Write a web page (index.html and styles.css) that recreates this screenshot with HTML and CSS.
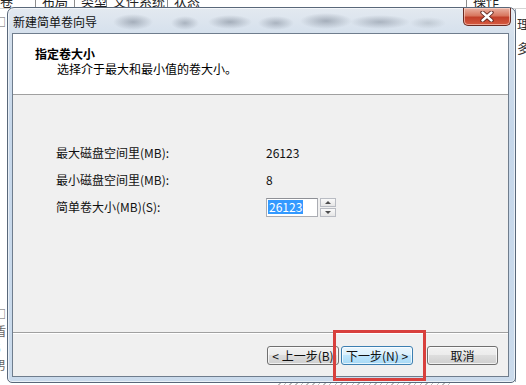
FILE: index.html
```html
<!DOCTYPE html>
<html lang="zh-CN">
<head>
  <meta charset="UTF-8">
  <meta name="viewport" content="width=device-width, initial-scale=1.0">
  <title>新建简单卷向导</title>
  <link rel="stylesheet" href="styles.css">
</head>
<body>
  <div class="app">
    <div class="app-head">
      <div class="col col-vol">卷</div>
      <div class="col col-layout">布局</div>
      <div class="col col-type">类型</div>
      <div class="col col-fs">文件系统</div>
      <div class="col col-state">状态</div>
      <div class="col-fill"></div>
      <div class="col col-ops">操作</div>
    </div>
    <div class="app-main">
      <div class="side-left">
        <div class="side-row row-a"><span>□</span></div>
        <div class="side-gap"></div>
        <div class="side-row"><span>□</span></div>
        <div class="side-row"><span>盾</span></div>
        <div class="side-row"><span>5</span></div>
        <div class="side-row"><span>男</span></div>
      </div>
      <div class="app-fill"></div>
      <div class="side-right">
        <div class="side-item">理</div>
        <div class="side-item">多</div>
      </div>
    </div>
    <div class="app-bottom"><div class="hatch"></div></div>
  </div>

  <div class="window">
    <div class="titlebar">
      <span class="title">新建简单卷向导</span>
      <a class="btn-close" href="#">
        <svg width="14" height="11" viewBox="0 0 14 11">
          <path d="M2.5 1.5 L11.5 9.5 M11.5 1.5 L2.5 9.5" stroke="#5a1f18" stroke-width="4.2" stroke-linecap="round"/>
          <path d="M2.5 1.5 L11.5 9.5 M11.5 1.5 L2.5 9.5" stroke="#fff" stroke-width="2.4" stroke-linecap="round"/>
        </svg>
      </a>
    </div>
    <div class="client">
      <div class="wiz-head">
        <div class="wiz-title">指定卷大小</div>
        <div class="wiz-sub">选择介于最大和最小值的卷大小。</div>
      </div>
      <div class="wiz-body">
        <div class="field">
          <div class="label">最大磁盘空间里(MB):</div>
          <div class="value">26123</div>
        </div>
        <div class="field">
          <div class="label">最小磁盘空间里(MB):</div>
          <div class="value">8</div>
        </div>
        <div class="field">
          <div class="label">简单卷大小(MB)(S):</div>
          <div class="value">
            <div class="spin">
              <div class="spin-input"><span class="sel">26123</span></div>
              <div class="spin-btns">
                <div class="spin-btn"><i class="tri-up"></i></div>
                <div class="spin-btn"><i class="tri-down"></i></div>
              </div>
            </div>
          </div>
        </div>
      </div>
      <div class="wiz-foot">
        <a class="btn" href="#">&lt; 上一步(B)</a>
        <a class="btn btn-hot" href="#">下一步(N) &gt;</a>
        <a class="btn btn-cancel" href="#">取消</a>
      </div>
    </div>
  </div>

  <div class="mark"></div>
</body>
</html>
```

FILE: styles.css
```css
html,body{
  margin: 0;
  padding: 0;
}
body{
  width: 526px;
  height: 385px;
  overflow: hidden;
  position: relative;
  background: #fff;
  font-family: "Noto Sans CJK SC", "Noto Sans", sans-serif;
  font-size: 12px;
  color: #000;
}
a{
  text-decoration: none;
  color: #000;
}

/* background app, mostly hidden behind the wizard */
.app{
  display: flex;
  flex-direction: column;
  height: 385px;
}
.app-head{
  display: flex;
  height: 8px;
  overflow: hidden;
  align-items: flex-end;
  border-bottom: 1px solid #d5d5d5;
  color: #222;
}
.col{
  height: 8px;
  line-height: 2px;
  font-size: 13px;
  padding-left: 6px;
  border-right: 1px solid #8d8d8d;
  box-sizing: border-box;
  white-space: nowrap;
}
.col-vol{ width: 36px; padding-left: 0; }
.col-layout{ width: 39px; }
.col-type{ width: 32px; }
.col-fs{ width: 61px; }
.col-state{ width: 40px; border-right: 0; }
.col-fill{ flex: 1; }
.col-ops{ width: 60px; border-right: 0; border-left: 1px solid #8d8d8d; }
.app-main{
  flex: 1;
  display: flex;
}
.side-left{
  width: 7px;
  display: flex;
  flex-direction: column;
  overflow: hidden;
  color: #666;
}
.side-row{
  display: flex;
  justify-content: flex-end;
  height: 17px;
  line-height: 17px;
  font-size: 12px;
}
.side-row span{
  flex: none;
  width: 13px;
}
.row-a{
  margin-top: 4px;
}
.side-gap{
  height: 275px;
}
.app-fill{
  flex: 1;
}
.side-right{
  width: 10px;
  padding-top: 5px;
  border-left: 1px solid #9aa6b4;
  overflow: hidden;
  color: #333;
}
.side-item{
  height: 24px;
  line-height: 20px;
  font-size: 13px;
  padding-left: 1px;
}
.app-bottom{
  height: 3px;
}
.hatch{
  margin-left: 275px;
  width: 175px;
  height: 3px;
  background: repeating-linear-gradient(135deg, #bdbdbd 0 1px, #fff 1px 4px);
}

/* wizard window */
.window{
  position: absolute;
  left: 7px;
  top: 7px;
  width: 509px;
  height: 376px;
  box-sizing: border-box;
  border: 1px solid #59687a;
  border-radius: 7px 7px 5px 5px;
  padding: 0 6px 5px 4px;
  display: flex;
  flex-direction: column;
  background: linear-gradient(#e3e9f0, #d3dfec 30px, #c6d7ea 120px, #cbdbec);
  box-shadow: inset 0 0 0 1px rgba(255,255,255,.6);
}
.titlebar{
  display: flex;
  justify-content: space-between;
  height: 25px;
  margin: 0 -6px 0 -4px;
  padding-left: 5px;
  background:
    radial-gradient(ellipse 20px 8px at 125px 14px, rgba(110,120,135,.5), transparent),
    radial-gradient(ellipse 14px 7px at 177px 15px, rgba(110,120,135,.45), transparent),
    radial-gradient(ellipse 22px 7px at 222px 14px, rgba(110,120,135,.5), transparent),
    radial-gradient(ellipse 18px 7px at 268px 15px, rgba(110,120,135,.45), transparent),
    radial-gradient(ellipse 26px 8px at 318px 13px, rgba(110,120,135,.5), transparent),
    radial-gradient(ellipse 30px 7px at 372px 14px, rgba(110,120,135,.45), transparent),
    radial-gradient(ellipse 18px 6px at 420px 15px, rgba(140,150,160,.35), transparent);
}
.title{
  padding-top: 6px;
  line-height: 16px;
  font-size: 12px;
  color: #111;
}
.btn-close{
  width: 48px;
  height: 18px;
  margin-right: 4px;
  box-sizing: border-box;
  border: 1px solid #6a2b22;
  border-top: 0;
  border-radius: 0 0 5px 5px;
  display: flex;
  align-items: center;
  justify-content: center;
  background: linear-gradient(#eab3a4, #d8775f 45%, #c2402a 55%, #d65a40);
  box-shadow: inset 0 0 0 1px rgba(255,220,210,.6);
}
.client{
  flex: 1;
  display: flex;
  flex-direction: column;
  border: 1px solid #6f7d8d;
  background: #f0f0f0;
}
.wiz-head{
  height: 61px;
  box-sizing: border-box;
  padding: 12px 0 0 22px;
  background: #fff;
  border-bottom: 1px solid #a0a0a0;
  line-height: 15px;
}
.wiz-title{
  font-weight: bold;
}
.wiz-sub{
  padding-left: 22px;
}
.wiz-body{
  flex: 1;
  padding: 44px 0 0 43px;
}
.field{
  display: flex;
  height: 27px;
  align-items: center;
}
.label{
  width: 210px;
  color: #111;
}
.value{
  color: #111;
}
.spin{
  display: flex;
  align-items: center;
  padding-top: 1px;
}
.spin-input{
  width: 52px;
  height: 19px;
  box-sizing: border-box;
  border: 1px solid #abadb3;
  border-top-color: #8e9096;
  background: #fff;
  padding: 1px 0 0 1px;
  line-height: 14px;
}
.sel{
  display: inline-block;
  background: #3399ff;
  color: #fff;
  padding: 0 1px;
}
.spin-btns{
  display: flex;
  flex-direction: column;
  gap: 1px;
  margin-left: 2px;
}
.spin-btn{
  width: 16px;
  height: 9px;
  box-sizing: border-box;
  border: 1px solid #b9bcc3;
  background: linear-gradient(#fafafa, #e6e6e6);
  display: flex;
  align-items: center;
  justify-content: center;
}
.tri-up{
  border-left: 3px solid transparent;
  border-right: 3px solid transparent;
  border-bottom: 3px solid #4d4d4d;
}
.tri-down{
  border-left: 3px solid transparent;
  border-right: 3px solid transparent;
  border-top: 3px solid #4d4d4d;
}
.wiz-foot{
  height: 44px;
  box-sizing: border-box;
  border-top: 1px solid #a0a0a0;
  box-shadow: inset 0 1px #fff;
  padding: 13px 10px 0 0;
  display: flex;
  justify-content: flex-end;
  align-items: flex-start;
}
.btn{
  width: 72px;
  height: 19px;
  box-sizing: border-box;
  border: 1px solid #707070;
  border-radius: 3px;
  background: linear-gradient(#f2f2f2, #ebebeb 50%, #dddddd 50%, #cfcfcf);
  box-shadow: inset 0 0 0 1px rgba(255,255,255,.7);
  text-align: center;
  line-height: 17px;
  color: #111;
}
.btn + .btn{
  margin-left: 2px;
}
.btn-hot{
  border-color: #3c7fb1;
  background: linear-gradient(#eaf6fd, #d9f0fc 50%, #bee6fd 50%, #a7d9f5);
}
.btn-cancel{
  margin-left: 14px !important;
  width: 71px;
}

/* red annotation box */
.mark{
  position: absolute;
  left: 333px;
  top: 330px;
  width: 93px;
  height: 51px;
  box-sizing: border-box;
  border: 3px solid #d8403d;
}
```
